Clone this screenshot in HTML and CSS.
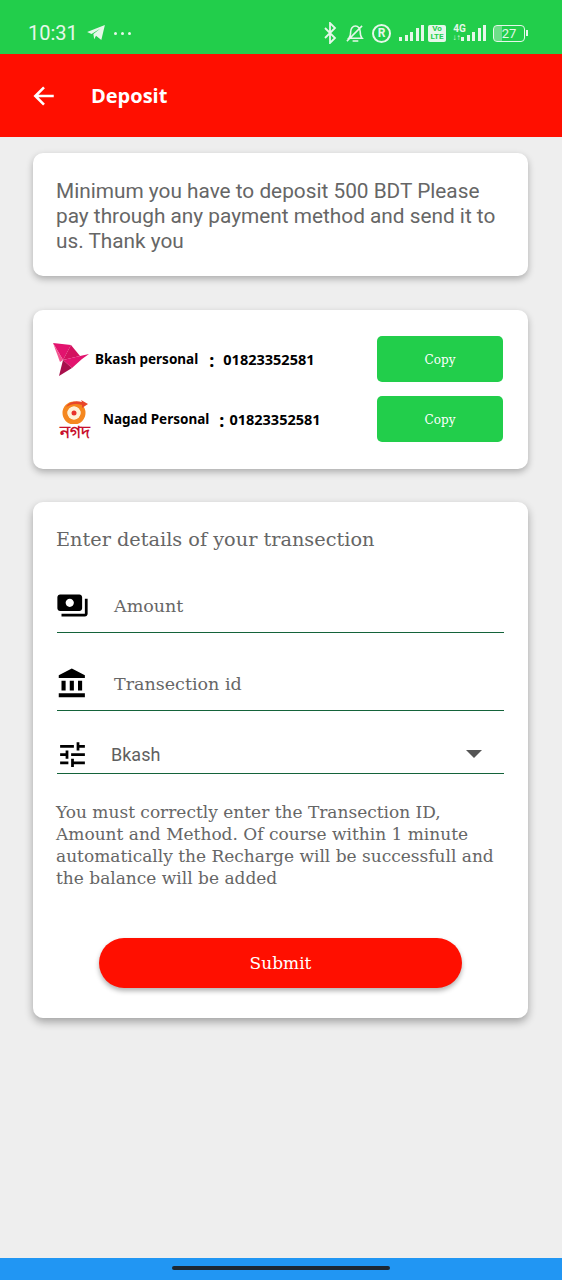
FILE: index.html
```html
<!DOCTYPE html>
<html lang="en">
<head>
    <meta charset="UTF-8">
    <meta name="viewport" content="width=device-width, initial-scale=1.0">
    <title>Deposit</title>
    <link rel="stylesheet" href="styles.css">
</head>
<body>
    <div class="phone">
        <!-- Status bar -->
        <div class="status-bar">
            <span class="clock">10:31</span>
            <svg class="st-telegram" viewBox="0 0 20 18" width="18" height="16"><path d="M0 8 20 0 16 17 10 12 8 16 7 10 15 4 5 10z" fill="#e6f7ea"/></svg>
            <span class="dots"><i></i><i></i><i></i></span>
            <span class="status-right">
                <svg viewBox="0 0 14 22" width="14" height="22"><path d="M2 6l10 10-5 5V1l5 5L2 16" fill="none" stroke="#e6f7ea" stroke-width="1.8"/></svg>
                <svg viewBox="0 0 20 22" width="19" height="21"><path d="M4 16c2-2 2-4 2-7 0-3 2-6 5-6s5 3 5 6c0 3 0 5 2 7zM8 19h6M2 19 18 3" fill="none" stroke="#e6f7ea" stroke-width="1.6"/></svg>
                <span class="reg">R</span>
                <span class="signal first"><i class="s1"></i><i class="s2"></i><i class="s3"></i><i class="s4"></i><i class="s5"></i></span>
                <span class="volte">Vo<br>LTE</span>
                <span class="net"><b>4G</b><small>↓↑</small></span>
                <span class="signal"><i class="s1"></i><i class="s2"></i><i class="s3"></i><i class="s4"></i><i class="s5"></i></span>
                <span class="battery"><span class="battery-level"></span><span class="battery-num">27</span></span>
                <span class="battery-tip"></span>
            </span>
        </div>

        <!-- Toolbar -->
        <div class="toolbar">
            <svg viewBox="0 0 24 24" width="26" height="26"><path d="M21 12H4M12 4l-8 8 8 8" fill="none" stroke="#fff" stroke-width="2.4"/></svg>
            <span class="toolbar-title">Deposit</span>
        </div>

        <div class="content">
            <div class="card notice">Minimum you have to deposit 500 BDT Please pay through any payment method and send it to us. Thank you</div>

            <div class="card methods">
                <div class="method">
                    <svg class="bkash-logo" viewBox="0 0 36 36" width="36" height="36">
                        <path d="M0 2 18 4 10 19z" fill="#e2136e"/>
                        <path d="M18 4 27 15 10 19z" fill="#d3125f"/>
                        <path d="M27 15 36 13 29 18 19 27 10 19z" fill="#e2136e"/>
                        <path d="M10 19 19 27 6 35z" fill="#a80f4c"/>
                        <path d="M0 2 10 19 7 21z" fill="#f2558f"/>
                    </svg>
                    <span class="method-label">Bkash personal</span>
                    <span class="colon">:</span>
                    <span class="method-num">01823352581</span>
                    <button class="copy-btn">Copy</button>
                </div>
                <div class="method nagad">
                    <span class="nagad-logo">
                        <svg viewBox="0 0 28 24" width="28" height="24">
                            <circle cx="13" cy="13" r="9" fill="none" stroke="#f5871f" stroke-width="5"/>
                            <path d="M5 7C8 2 14 0 21 2l-1-2 7 4-6 4 0-3C15 3 10 4 5 7z" fill="#e8462a"/>
                            <circle cx="13" cy="13" r="6.5" fill="#fff1d6"/>
                            <circle cx="13" cy="13" r="2.5" fill="#e8312a"/>
                        </svg>
                        <span class="nagad-word">নগদ</span>
                    </span>
                    <span class="method-label">Nagad Personal</span>
                    <span class="colon">:</span>
                    <span class="method-num">01823352581</span>
                    <button class="copy-btn">Copy</button>
                </div>
            </div>

            <div class="card details">
                <div class="details-title">Enter details of your transection</div>

                <div class="field">
                    <svg viewBox="0 0 24 24" width="33" height="33"><path d="M19 14V6c0-1.1-.9-2-2-2H3c-1.1 0-2 .9-2 2v8c0 1.1.9 2 2 2h14c1.1 0 2-.9 2-2zm-9-1c-1.66 0-3-1.34-3-3s1.34-3 3-3 3 1.34 3 3-1.34 3-3 3zm13-6v11c0 1.1-.9 2-2 2H4v-2h17V7h2z"/></svg>
                    <span class="field-text">Amount</span>
                </div>
                <div class="field">
                    <svg viewBox="0 0 24 24" width="33" height="33"><path d="M4 10v7h3v-7H4zm6 0v7h3v-7h-3zM2 22h19v-3H2v3zm14-12v7h3v-7h-3zm-4.5-9L2 6v2h19V6l-9.5-5z"/></svg>
                    <span class="field-text">Transection id</span>
                </div>
                <div class="field select">
                    <svg viewBox="0 0 24 24" width="33" height="33"><path d="M3 17v2h6v-2H3zM3 5v2h10V5H3zm10 16v-2h8v-2h-8v-2h-2v6h2zM7 9v2H3v2h4v2h2V9H7zm14 4v-2H11v2h10zm-6-4h2V7h4V5h-4V3h-2v6z"/></svg>
                    <span class="select-text">Bkash</span>
                    <span class="caret"></span>
                </div>

                <p class="hint">You must correctly enter the Transection ID, Amount and Method. Of course within 1 minute automatically the Recharge will be successfull and the balance will be added</p>

                <button class="submit-btn">Submit</button>
            </div>
        </div>

        <!-- Navigation bar -->
        <div class="nav-bar"><span class="nav-handle"></span></div>
    </div>
</body>
</html>
```
FILE: styles.css
```css
html, body {
    margin: 0;
    padding: 0;
    height: 100%;
}

.phone {
    width: 562px;
    height: 1280px;
    display: flex;
    flex-direction: column;
    background: #eeeeee;
    overflow: hidden;
}

/* Status bar */
.status-bar {
    height: 54px;
    background: #22ce4b;
    display: flex;
    align-items: center;
    padding: 12px 34px 0 28px;
    box-sizing: border-box;
    color: #e6f7ea;
    font-family: Roboto, sans-serif;
    flex-shrink: 0;
}

.clock {
    font-size: 20px;
    margin-right: 9px;
}

.st-telegram {
    margin-right: 9px;
}

.dots {
    display: flex;
    gap: 4px;
}

.dots i {
    width: 3px;
    height: 3px;
    border-radius: 50%;
    background: #e6f7ea;
}

.status-right {
    margin-left: auto;
    display: flex;
    align-items: center;
    gap: 8px;
}

.reg {
    width: 15px;
    height: 15px;
    border: 2px solid #e6f7ea;
    border-radius: 50%;
    font-size: 12px;
    font-weight: 700;
    line-height: 15px;
    text-align: center;
}

.signal {
    display: flex;
    align-items: flex-end;
    gap: 2.5px;
    height: 16px;
}

.signal.first {
    margin-right: -4px;
}

.signal i {
    width: 3px;
    background: #e6f7ea;
}

.s1 { height: 4px; }
.s2 { height: 6px; }
.s3 { height: 9px; }
.s4 { height: 13px; }
.s5 { height: 16px; }

.volte {
    width: 18px;
    height: 17px;
    margin-right: -2px;
    background: #e6f7ea;
    color: #22ce4b;
    border-radius: 2px;
    font-size: 8px;
    font-weight: 700;
    line-height: 8px;
    text-align: center;
}

.net {
    width: 15px;
    display: flex;
    flex-direction: column;
    align-items: center;
    font-size: 10px;
    line-height: 10px;
    margin-right: -14px;
}

.net small {
    font-size: 8px;
    line-height: 8px;
    margin-right: 6px;
}

.battery {
    position: relative;
    width: 30px;
    height: 15px;
    margin-left: -1px;
    border: 1.5px solid #e6f7ea;
    border-radius: 4px;
    font-size: 13px;
    line-height: 15px;
    text-align: center;
    overflow: hidden;
}

.battery-level {
    position: absolute;
    left: 0;
    top: 0;
    bottom: 0;
    width: 27%;
    background: rgba(255, 255, 255, 0.35);
}

.battery-num {
    position: relative;
}

.battery-tip {
    width: 2px;
    height: 6px;
    margin-left: -7px;
    background: #e6f7ea;
}

/* Toolbar */
.toolbar {
    height: 83px;
    background: #ff0f00;
    display: flex;
    align-items: center;
    padding-left: 31px;
    box-sizing: border-box;
    flex-shrink: 0;
}

.toolbar-title {
    margin-left: 34px;
    color: #fff;
    font-family: "Open Sans", sans-serif;
    font-size: 20px;
    font-weight: 700;
}

/* Cards */
.content {
    flex: 1;
    padding: 16px 34px 0 33px;
}

.card {
    background: #fff;
    border-radius: 10px;
    box-shadow: 0 3px 7px rgba(0, 0, 0, 0.28);
    margin-bottom: 34px;
}

.notice {
    height: 123px;
    box-sizing: border-box;
    padding: 26px 23px 0;
    font-family: Roboto, sans-serif;
    font-size: 20.8px;
    line-height: 25px;
    color: #666;
}

.methods {
    height: 159px;
    margin-bottom: 33px;
    box-sizing: border-box;
    padding: 26px 25px 0 20px;
    display: flex;
    flex-direction: column;
    gap: 14px;
}

.method {
    height: 46px;
    display: flex;
    align-items: center;
    font-family: "Noto Sans", sans-serif;
    font-size: 13.5px;
    font-weight: 700;
    color: #000;
}

.bkash-logo {
    margin-right: 6px;
}

.method-label {
    white-space: nowrap;
}

.colon {
    margin: 2px 9px 0 11px;
    font-size: 18px;
}

.method-num {
    font-size: 14.5px;
}

.nagad .colon {
    margin: 2px 5px 0 10px;
}

.nagad-logo {
    width: 50px;
    display: flex;
    flex-direction: column;
    align-items: center;
    padding-right: 6px;
    box-sizing: border-box;
}

.nagad-word {
    font-family: "Noto Sans", sans-serif;
    font-size: 17px;
    line-height: 15px;
    color: #c8102e;
}

.copy-btn {
    margin-left: auto;
    width: 126px;
    height: 46px;
    padding: 2px 0 0;
    border: 0;
    border-radius: 5px;
    background: #22ce4b;
    color: #fff;
    font-family: "DejaVu Serif", serif;
    font-size: 12px;
    flex-shrink: 0;
}

.details {
    height: 516px;
    box-sizing: border-box;
    padding: 24px 24px 0 23px;
    box-shadow: 0 4px 8px rgba(0, 0, 0, 0.32);
}

.details-title {
    font-family: "DejaVu Serif", serif;
    font-size: 19.3px;
    line-height: 28px;
    color: #666;
}

.field {
    height: 60px;
    box-sizing: border-box;
    padding-top: 6px;
    margin-top: 18px;
    border-bottom: 1px solid #14633a;
    display: flex;
    align-items: center;
    margin-left: 1px;
}

.field svg {
    margin-left: -1px;
}

.details-title + .field {
    margin-top: 19px;
}

.field-text {
    margin-left: 25px;
    font-family: "DejaVu Serif", serif;
    font-size: 17.5px;
    color: #666;
}

.field.select {
    height: 45px;
}

.select-text {
    margin-left: 22px;
    font-family: Roboto, sans-serif;
    font-size: 18px;
    color: #5f5f5f;
}

.caret {
    margin-left: auto;
    margin-right: 22px;
    border-left: 8px solid transparent;
    border-right: 8px solid transparent;
    border-top: 8px solid #555;
}

.hint {
    margin: 27px 0 0;
    font-family: "DejaVu Serif", serif;
    font-size: 17px;
    line-height: 22px;
    color: #666;
}

.submit-btn {
    display: block;
    width: 363px;
    height: 50px;
    margin: 49px 0 0 43px;
    border: 0;
    border-radius: 25px;
    background: #ff0f00;
    box-shadow: 0 3px 5px rgba(0, 0, 0, 0.3);
    color: #fff;
    font-family: "DejaVu Serif", serif;
    font-size: 17px;
}

/* Navigation bar */
.nav-bar {
    height: 22px;
    background: #2196f3;
    display: flex;
    justify-content: center;
    padding-top: 8px;
    box-sizing: border-box;
    flex-shrink: 0;
}

.nav-handle {
    width: 218px;
    height: 4px;
    border-radius: 2px;
    background: #1c2733;
}
```
